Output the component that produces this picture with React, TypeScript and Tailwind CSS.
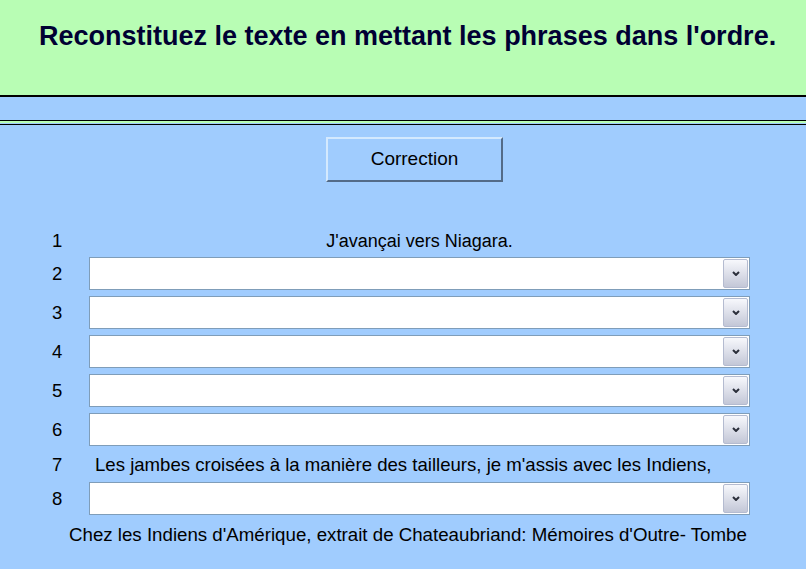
import React from "react";

const font = { fontFamily: '"Liberation Sans", Arial, sans-serif' };

function Chevron() {
  return (
    <svg width="8" height="5" viewBox="0 0 8 5" className="block">
      <path d="M1 1 L4 4 L7 1" stroke="#2b2f3a" strokeWidth="2" fill="none" />
    </svg>
  );
}

function Dropdown() {
  return (
    <div className="w-[661px] h-[33px] bg-white border border-[#7f9db9] flex items-center justify-end pr-[1px]">
      <div className="w-[25px] h-[29px] rounded-[2px] border border-[#b4bbd0] bg-gradient-to-b from-[#f7f8fc] to-[#c3c7d7] flex items-center justify-center">
        <Chevron />
      </div>
    </div>
  );
}

function NumberLabel({ n }: { n: number }) {
  return <div className="w-[37px] pl-[52px] box-content text-[18.5px] text-black">{n}</div>;
}

export default function App() {
  const ordered = [2, 3, 4, 5, 6];

  return (
    <div className="w-[806px] h-[569px] bg-[#a0ccfe] overflow-hidden" style={font}>
      {/* header */}
      <div className="h-[97px] bg-[#b8fdb4] border-b-2 border-black pt-[19px]">
        <h1 className="text-[27px] leading-[34px] font-bold text-[#000033] pl-[39px] whitespace-nowrap">
          Reconstituez le texte en mettant les phrases dans l'ordre.
        </h1>
      </div>
      <div className="h-[28px] border-b border-black">
        <div className="h-[24px] border-b border-black" />
        <div className="h-[2px] bg-[#b8fdb4]" />
      </div>

      {/* correction button */}
      <div className="pl-[326px] pt-[12px]">
        <button className="w-[177px] h-[45px] bg-[#a0ccfe] border-2 border-t-[#d4e9fe] border-l-[#d4e9fe] border-r-[#536b88] border-b-[#536b88] text-[19px] text-black">
          Correction
        </button>
      </div>

      {/* sentences */}
      <div className="mt-[47px] flex flex-col">
        <div className="flex items-center h-[24px]">
          <NumberLabel n={1} />
          <div className="w-[661px] text-center text-[18px] text-black">J'avançai vers Niagara.</div>
        </div>

        <div className="mt-[4px] flex flex-col gap-[6px]">
          {ordered.map((n) => (
            <div key={n} className="flex items-center">
              <NumberLabel n={n} />
              <Dropdown />
            </div>
          ))}
        </div>

        <div className="mt-[7px] flex items-center h-[24px]">
          <NumberLabel n={7} />
          <div className="pl-[6px] text-[18.6px] text-black whitespace-nowrap">
            Les jambes croisées à la manière des tailleurs, je m'assis avec les Indiens,
          </div>
        </div>

        <div className="mt-[5px] flex items-center">
          <NumberLabel n={8} />
          <Dropdown />
        </div>

        <div className="mt-[8px] h-[24px] pl-[69px] text-[18.7px] text-black whitespace-nowrap leading-[24px]">
          Chez les Indiens d'Amérique, extrait de Chateaubriand: Mémoires d'Outre- Tombe
        </div>
      </div>
    </div>
  );
}
